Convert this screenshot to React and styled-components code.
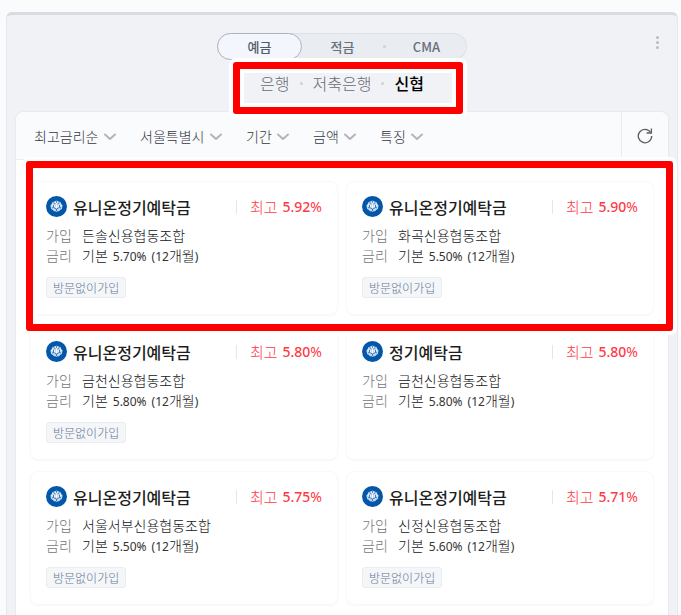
import React from 'react'
import styled, { createGlobalStyle, css } from 'styled-components'

const GlobalStyle = createGlobalStyle`
  * {
    box-sizing: border-box;
  }
  body {
    margin: 0;
    background-color: #fafbfd;
    font-family: 'Noto Sans CJK KR', 'Noto Sans', sans-serif;
    color: #333;
  }
  button,
  select {
    margin: 0;
    padding: 0;
    border: 0;
    background: none;
    font-family: inherit;
    color: inherit;
  }
`

const Page = styled.div`
  min-height: 100vh;
  display: flex;
  flex-direction: column;
  padding: 12px 3px 0 6px;
`

const Panel = styled.main`
  flex: 1;
  display: flex;
  flex-direction: column;
  padding: 0 9px;
  background-color: #f1f2f6;
  border: 1px solid #e6e8ed;
  border-top: 3px solid #d9dbe1;
  border-bottom: 0;
  border-radius: 6px 6px 0 0;
`

const Header = styled.header`
  display: grid;
  grid-template-columns: 1fr auto 1fr;
  padding-top: 18px;
`

const ProductTabs = styled.nav`
  grid-column: 2;
  display: flex;
  align-items: center;
  height: 27px;
  background-color: #e9ecf1;
  border-radius: 14px;
  box-shadow: inset 0 0 0 1px #dfe2e8;
`

const ProductTab = styled.button`
  width: 81px;
  height: 27px;
  font-size: 13px;
  font-weight: 500;
  line-height: 20px;
  color: #6a6f7a;
  ${({ $active }) =>
    $active &&
    css`
      width: 85px;
      color: #555b66;
      background-color: #f3f6fc;
      border: 1px solid #adb1b9;
      border-radius: 14px;
    `}
`

const Dot = styled.span`
  width: 3px;
  height: 3px;
  border-radius: 50%;
  background-color: #ced1d7;
`

const MoreButton = styled.button`
  grid-column: 3;
  justify-self: end;
  display: flex;
  flex-direction: column;
  align-items: center;
  gap: 2px;
  width: 22px;
  height: 20px;
  padding-top: 3px;
`

const MoreDot = styled(Dot)`
  background-color: #b9bbc0;
`

const BankTabs = styled.nav`
  position: relative;
  align-self: center;
  display: flex;
  align-items: center;
  gap: 10px;
  height: 52px;
  margin: 2px 0 -2px;
  padding: 0 28px 10px;
`

const BankTab = styled.button`
  font-size: 16px;
  line-height: 24px;
  color: ${({ $active }) => ($active ? '#000' : '#666b75')};
  font-weight: ${({ $active }) => ($active ? 500 : 300)};
`

// marker frame that lies over the content it points out
const Highlight = styled.span`
  position: absolute;
  z-index: 1;
  inset: ${({ $inset }) => $inset};
  border: 7px solid #f00;
  border-radius: 3px;
  box-shadow: 0 0 0 4px #fff, inset 0 0 0 4px #fff;
  pointer-events: none;
`

const Products = styled.section`
  flex: 1;
  background-color: #fff;
  border-radius: 8px 8px 0 0;
  box-shadow: 0 0 2px rgba(40, 50, 80, 0.14);
`

const Toolbar = styled.div`
  display: flex;
  align-items: stretch;
  height: 48px;
  background-color: #fafbfd;
  border-bottom: 1px solid #e9ecf1;
  border-radius: 8px 8px 0 0;
`

const Filters = styled.div`
  flex: 1;
  display: flex;
  align-items: center;
  gap: 24px;
  padding-left: 18px;
`

const FilterLabel = styled.label`
  display: flex;
  align-items: center;
  gap: 5px;
  color: #35383f;
`

const FilterSelect = styled.select`
  appearance: none;
  font-size: 14px;
  font-weight: 300;
  line-height: 20px;
`

const RefreshButton = styled.button`
  display: flex;
  align-items: center;
  justify-content: center;
  width: 47px;
  border-left: 1px solid #e9ecf1;
`

const Rows = styled.div`
  display: flex;
  flex-direction: column;
  gap: 11px;
  padding: 21px 14px 0;
`

const Row = styled.div`
  position: relative;
  display: grid;
  grid-template-columns: 1fr 1fr;
  gap: 8px;
`

const Card = styled.article`
  padding: 13px 15px;
  height: 134px;
  background-color: #fff;
  border: 1px solid #f8f9fa;
  border-radius: 8px;
  box-shadow: 0 1px 2px rgba(40, 50, 80, 0.04);
`

const CardHeader = styled.div`
  display: flex;
  align-items: center;
  height: 23px;
  margin-bottom: 7px;
`

const CardTitle = styled.h2`
  flex: 1;
  margin: 0 0 0 6px;
  font-size: 16px;
  font-weight: 500;
  line-height: 22px;
  color: #1d1e20;
`

const Best = styled.div`
  display: flex;
  align-items: center;
  gap: 5px;
  font-size: 15px;
  font-weight: 300;
  line-height: 22px;
  color: #ff3a46;
  &::before {
    content: '';
    width: 1px;
    height: 14px;
    margin-right: 8px;
    background-color: #e4e6eb;
  }
`

const BestRate = styled.span`
  font-family: 'Noto Sans', sans-serif;
  font-size: 14px;
  font-weight: ${({ $light }) => ($light ? 400 : 500)};
`

const Details = styled.dl`
  display: grid;
  grid-template-columns: 36px 1fr;
  grid-auto-rows: 20px;
  margin: 0 0 12px;
  font-size: 14px;
  font-weight: 300;
  line-height: 20px;
`

const Term = styled.dt`
  color: #74767a;
`

const Value = styled.dd`
  display: flex;
  align-items: baseline;
  gap: 5px;
  margin: 0;
  color: #141518;
`

const Latin = styled.span`
  font-family: 'Noto Sans', sans-serif;
  font-size: 12px;
  font-weight: 400;
  color: #333;
`

const Tag = styled.span`
  display: flex;
  align-items: center;
  width: fit-content;
  height: 21px;
  padding: 0 6px;
  font-size: 12px;
  font-weight: 300;
  line-height: 18px;
  color: #657899;
  background-color: #f4f6f8;
  border: 1px solid #e9ecf0;
  border-radius: 3px;
`

const banks = ['은행', '저축은행', '신협']

const filters = ['최고금리순', '서울특별시', '기간', '금액', '특징']

const rows = [
  [
    { title: '유니온정기예탁금', best: '5.92', union: '든솔신용협동조합', base: '5.70', tag: true },
    { title: '유니온정기예탁금', best: '5.90', union: '화곡신용협동조합', base: '5.50', tag: true },
  ],
  [
    { title: '유니온정기예탁금', best: '5.80', union: '금천신용협동조합', base: '5.80', tag: true },
    { title: '정기예탁금', best: '5.80', union: '금천신용협동조합', base: '5.80', tag: false },
  ],
  [
    { title: '유니온정기예탁금', best: '5.75', union: '서울서부신용협동조합', base: '5.50', tag: true },
    { title: '유니온정기예탁금', best: '5.71', union: '신정신용협동조합', base: '5.60', tag: true },
  ],
]

const Chevron = () => (
  <svg width="12" height="10" viewBox="0 0 12 10" fill="none" aria-hidden="true">
    <path d="M1 3.5l5 4.5 5-4.5" stroke="#b3b5ba" strokeWidth="2" strokeLinecap="round" strokeLinejoin="round" />
  </svg>
)

const RefreshIcon = () => (
  <svg width="16" height="16" viewBox="0 0 16 16" fill="none" stroke="#5b5d62" strokeWidth="1.3" aria-hidden="true">
    <path d="M13.6 4.4A6.7 6.7 0 1 0 14.7 8" />
    <path d="M14.4 0.6v4.4H9.6" />
  </svg>
)

const UnionLogo = () => (
  <svg width="21" height="21" viewBox="0 0 21 21" aria-hidden="true">
    <circle cx="10.5" cy="10.5" r="10.5" fill="#0456a8" />
    <path
      d="M10.5 4.6l2.2.9 2 .8.6 1.6 1.3 1.6-.4 1.7-.3 1.8-1.8 1-1 1.2-1.5.1-1.1.8-1.1-.8-1.5-.1-1-1.2-1.8-1-.3-1.8-.4-1.7 1.3-1.6.6-1.6 2-.8z"
      fill="#c3d9ef"
    />
    <path
      d="M10.5 8.4v3.8M8.6 9.4v2.2M12.4 9.4v2.2M6.9 8.2l-1.1 1.6M14.1 8.2l1.1 1.6M9 6.4l1.5.7 1.5-.7"
      fill="none"
      stroke="#fff"
      strokeWidth=".9"
    />
    <path
      d="M10.5 4.8v2M7.5 6.6l2 1.3M13.5 6.6l-2 1.3M7.5 8.8v2.6l3 1.8 3-1.8V8.8M10.5 13.2v2M6 12l1.5-.6M15 12l-1.5-.6"
      fill="none"
      stroke="#0456a8"
      strokeWidth=".7"
    />
  </svg>
)

const ProductCard = ({ title, best, union, base, tag }) => (
  <Card>
    <CardHeader>
      <UnionLogo />
      <CardTitle>{title}</CardTitle>
      <Best>
        <span>최고</span>
        <span>
          <BestRate>{best}</BestRate>
          <BestRate $light>%</BestRate>
        </span>
      </Best>
    </CardHeader>
    <Details>
      <Term>가입</Term>
      <Value>{union}</Value>
      <Term>금리</Term>
      <Value>
        <span>기본</span>
        <Latin>{base}%</Latin>
        <span>
          <Latin>(12</Latin>개월<Latin>)</Latin>
        </span>
      </Value>
    </Details>
    {tag && <Tag>방문없이가입</Tag>}
  </Card>
)

const App = () => (
  <>
    <GlobalStyle />
    <Page>
      <Panel>
        <Header>
          <ProductTabs>
            <ProductTab $active>예금</ProductTab>
            <ProductTab>적금</ProductTab>
            <Dot />
            <ProductTab>CMA</ProductTab>
          </ProductTabs>
          <MoreButton aria-label="더보기">
            <MoreDot />
            <MoreDot />
            <MoreDot />
          </MoreButton>
        </Header>
        <BankTabs>
          {banks.map((bank, index) => (
            <React.Fragment key={bank}>
              {index > 0 && <Dot />}
              <BankTab $active={bank === '신협'}>{bank}</BankTab>
            </React.Fragment>
          ))}
          <Highlight $inset="0 -11px 0 1px" />
        </BankTabs>
        <Products>
          <Toolbar>
            <Filters>
              {filters.map((name) => (
                <FilterLabel key={name}>
                  <FilterSelect aria-label={name}>
                    <option>{name}</option>
                  </FilterSelect>
                  <Chevron />
                </FilterLabel>
              ))}
            </Filters>
            <RefreshButton aria-label="새로고침">
              <RefreshIcon />
            </RefreshButton>
          </Toolbar>
          <Rows>
            {rows.map((cards, index) => (
              <Row key={index}>
                {cards.map((card, i) => (
                  <ProductCard key={i} {...card} />
                ))}
                {index === 0 && <Highlight $inset="-20px -19px -16px -4px" />}
              </Row>
            ))}
          </Rows>
        </Products>
      </Panel>
    </Page>
  </>
)

export default App
